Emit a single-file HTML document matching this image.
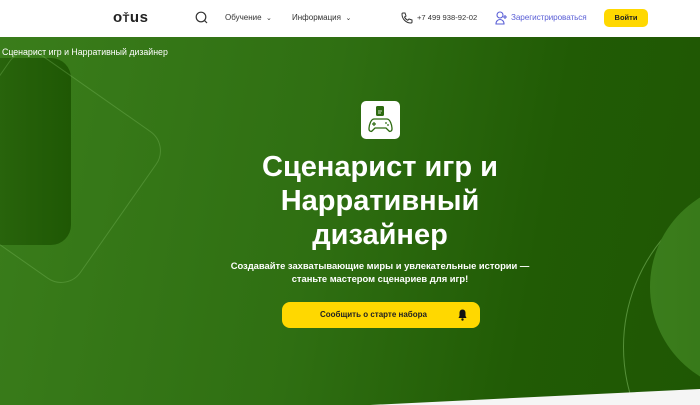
<!DOCTYPE html>
<html><head><meta charset="utf-8"><style>
*{margin:0;padding:0;box-sizing:border-box}
html,body{width:700px;height:405px;overflow:hidden}
body{font-family:"Liberation Sans",sans-serif;background:#fff;position:relative}
.hdr{height:37px;background:#fff;position:relative;font-size:8px;color:#333}
.hdr>*{position:absolute;top:0;line-height:36px;white-space:nowrap}
.hero{position:absolute;top:37px;left:0;width:700px;height:368px;overflow:hidden;background:linear-gradient(100deg,#3a7d1b 0%,#2f6f12 45%,#215b05 75%,#1f5704 100%)}
.btn{position:absolute;left:282px;top:302px;width:198px;height:26px;background:#ffd800;border-radius:8px;font-size:8px;font-weight:bold;color:#222;line-height:26px;padding-left:38px;white-space:nowrap}
</style></head><body>
<div class="hdr">
 <div style="left:113px;font-size:15px;font-weight:bold;color:#222;letter-spacing:0.5px">o<span style="font-size:11px">Ť</span>us</div>
 <svg style="left:195px;top:11px" width="13" height="13" viewBox="0 0 13 13"><circle cx="6" cy="6" r="4.8" fill="none" stroke="#333" stroke-width="1.2"/><path d="M9.5 9.5L12 12" stroke="#333" stroke-width="1.2"/></svg>
 <div style="left:225px">Обучение&nbsp; <span style="font-size:7px">⌄</span></div>
 <div style="left:292px">Информация&nbsp; <span style="font-size:7px">⌄</span></div>
 <svg style="left:401px;top:12px" width="12" height="12" viewBox="0 0 12 12"><path d="M2 1l2 0 1 3-1.5 1c.7 1.5 1.8 2.6 3.3 3.3L8 7l3 1v2c0 .6-.4 1-1 1C5 11 1 7 1 2c0-.6.4-1 1-1z" fill="none" stroke="#333" stroke-width="1"/></svg>
 <div style="left:417px;font-size:7.6px">+7 499 938-92-02</div>
 <svg style="left:495px;top:11px" width="13" height="14" viewBox="0 0 13 14"><circle cx="5" cy="4" r="3" fill="none" stroke="#5a5fd6" stroke-width="1.1"/><path d="M1 13c0-3 2-4.5 4-4.5s4 1.5 4 4.5z" fill="none" stroke="#5a5fd6" stroke-width="1.1"/><path d="M10 4v4M8 6h4" stroke="#5a5fd6" stroke-width="1.1"/></svg>
 <div style="left:511px;color:#5a5fd6;font-size:8.2px;letter-spacing:-0.1px">Зарегистрироваться</div>
 <div style="left:604px;top:9px;width:44px;height:18px;background:#ffd800;border-radius:5px;line-height:18px;text-align:center;font-weight:bold;font-size:7.5px;color:#222">Войти</div>
</div>
<div class="hero">
 <div style="position:absolute;left:-40px;top:21px;width:111px;height:187px;border-radius:20px;background:linear-gradient(90deg,#2d6a10,#1f5804)"></div>
 <div style="position:absolute;left:-45px;top:40px;width:180px;height:180px;border-radius:24px;border:1px solid rgba(140,200,110,.3);transform:rotate(35deg)"></div>
 <div style="position:absolute;left:623px;top:140px;width:340px;height:340px;border-radius:50%;border:1px solid rgba(140,200,110,.5)"></div>
 <div style="position:absolute;left:650px;top:145px;width:210px;height:210px;border-radius:50%;background:linear-gradient(90deg,#3b7d1c,#2f7012)"></div>
 <svg style="position:absolute;left:0;top:0" width="700" height="368"><polygon points="370,368 700,352 700,368" fill="#f5f5f5"/></svg>
 <div style="position:absolute;left:2px;top:10px;font-size:8.8px;color:#fff;white-space:nowrap">Сценарист игр и Нарративный дизайнер</div>
 <div style="position:absolute;left:361px;top:64px;width:39px;height:38px;background:#fff;border-radius:5px">
  <svg width="39" height="38" viewBox="0 0 39 38"><rect x="15" y="5" width="8" height="10" rx="1.5" fill="#2d6a10"/><path d="M17 10h4M17 12h3" stroke="#fff" stroke-width=".8"/><path d="M13 18h13c3 0 5 6 5 10 0 2-2 3-3 2l-3-3H14l-3 3c-1 1-3 0-3-2 0-4 2-10 5-10z" fill="none" stroke="#2d6a10" stroke-width="1.3"/><path d="M13 21v4M11 23h4" stroke="#2d6a10" stroke-width="1.2"/><circle cx="25" cy="22" r=".9" fill="#2d6a10"/><circle cx="27" cy="24" r=".9" fill="#2d6a10"/></svg>
 </div>
 <div style="position:absolute;left:180px;width:400px;top:113px;text-align:center;color:#fff;font-weight:bold;font-size:29px;line-height:34px">Сценарист игр и<br>Нарративный<br>дизайнер</div>
 <div style="position:absolute;left:180px;width:400px;top:223px;text-align:center;color:#fff;font-weight:bold;font-size:9.4px;line-height:12.5px">Создавайте захватывающие миры и увлекательные истории —<br>станьте мастером сценариев для игр!</div>
</div>
<div class="btn">Сообщить о старте набора
 <svg style="position:absolute;left:176px;top:7px" width="9" height="12" viewBox="0 0 9 12"><path d="M4.5 0.5c-2 0-3 1.5-3 3.5v3L0.5 9h8l-1-2V4c0-2-1-3.5-3-3.5z" fill="#111"/><circle cx="4.5" cy="10.5" r="1.2" fill="#111"/></svg>
</div>
</body></html>
